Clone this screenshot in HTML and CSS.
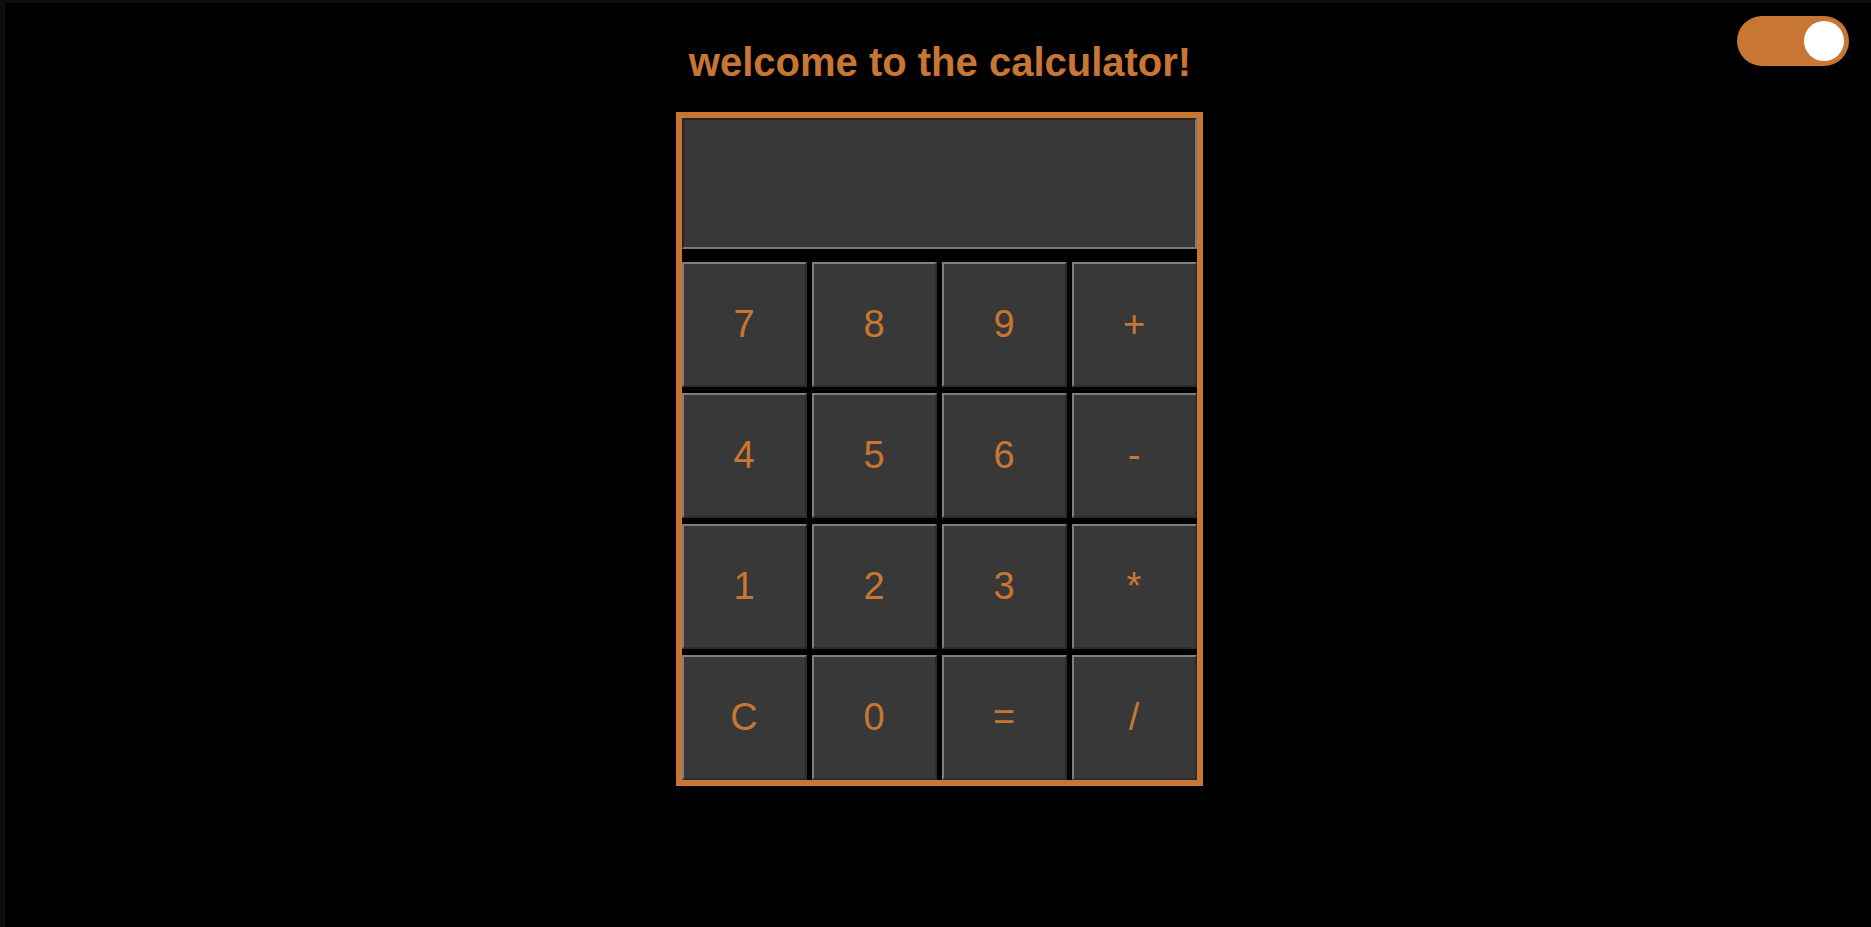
FILE: index.html
```html
<!DOCTYPE html>
<html lang="en">
<head>
<meta charset="utf-8">
<title>Calculator</title>
<link rel="stylesheet" href="styles.css">
</head>
<body>
  <div class="toggle"><span class="knob"></span></div>
  <h1 class="title">welcome to the calculator!</h1>
  <div class="calc">
    <input class="display" type="text" readonly>
    <div class="keys">
      <button class="key">7</button>
      <button class="key">8</button>
      <button class="key">9</button>
      <button class="key">+</button>
      <button class="key">4</button>
      <button class="key">5</button>
      <button class="key">6</button>
      <button class="key">-</button>
      <button class="key">1</button>
      <button class="key">2</button>
      <button class="key">3</button>
      <button class="key">*</button>
      <button class="key">C</button>
      <button class="key">0</button>
      <button class="key">=</button>
      <button class="key">/</button>
    </div>
  </div>
</body>
</html>
```
FILE: styles.css
```css
html, body {
  margin: 0;
  padding: 0;
}
body {
  background: #000;
  border-top: 3px solid #0e0d14;
  border-left: 5px solid #0e0d14;
  min-height: 100vh;
  box-sizing: border-box;
  font-family: "Liberation Sans", Arial, sans-serif;
  position: relative;
}
.toggle {
  position: absolute;
  top: 13px;
  right: 22px;
  width: 112px;
  height: 50px;
  border-radius: 25px;
  background: #c77634;
}
.knob {
  position: absolute;
  top: 5px;
  right: 5px;
  width: 40px;
  height: 40px;
  border-radius: 50%;
  background: #fff;
}
.title {
  margin: 36px 0 0;
  padding-left: 4px;
  font-size: 40px;
  line-height: 46px;
  font-weight: bold;
  color: #c77634;
  text-align: center;
}
.calc {
  width: 515px;
  margin: 27px auto 0;
  border: 6px solid #c77634;
  display: flex;
  flex-direction: column;
  transform: translateX(1px);
}
.display {
  display: block;
  box-sizing: border-box;
  width: 515px;
  height: 131px;
  margin: 0 0 13px;
  padding: 0;
  background: #383838;
  border: 2px solid;
  border-color: #262626 #7a7a7a #7a7a7a #262626;
  outline: none;
}
.keys {
  display: grid;
  grid-template-columns: repeat(4, 125px);
  grid-auto-rows: 125px;
  column-gap: 5px;
  row-gap: 6px;
}
.key {
  box-sizing: border-box;
  margin: 0;
  padding: 0;
  background: #383838;
  border: 2px solid;
  border-color: #7f7f7f #2c2c2c #2c2c2c #7f7f7f;
  color: #c77634;
  font-family: "Liberation Sans", Arial, sans-serif;
  font-size: 38px;
}
```
